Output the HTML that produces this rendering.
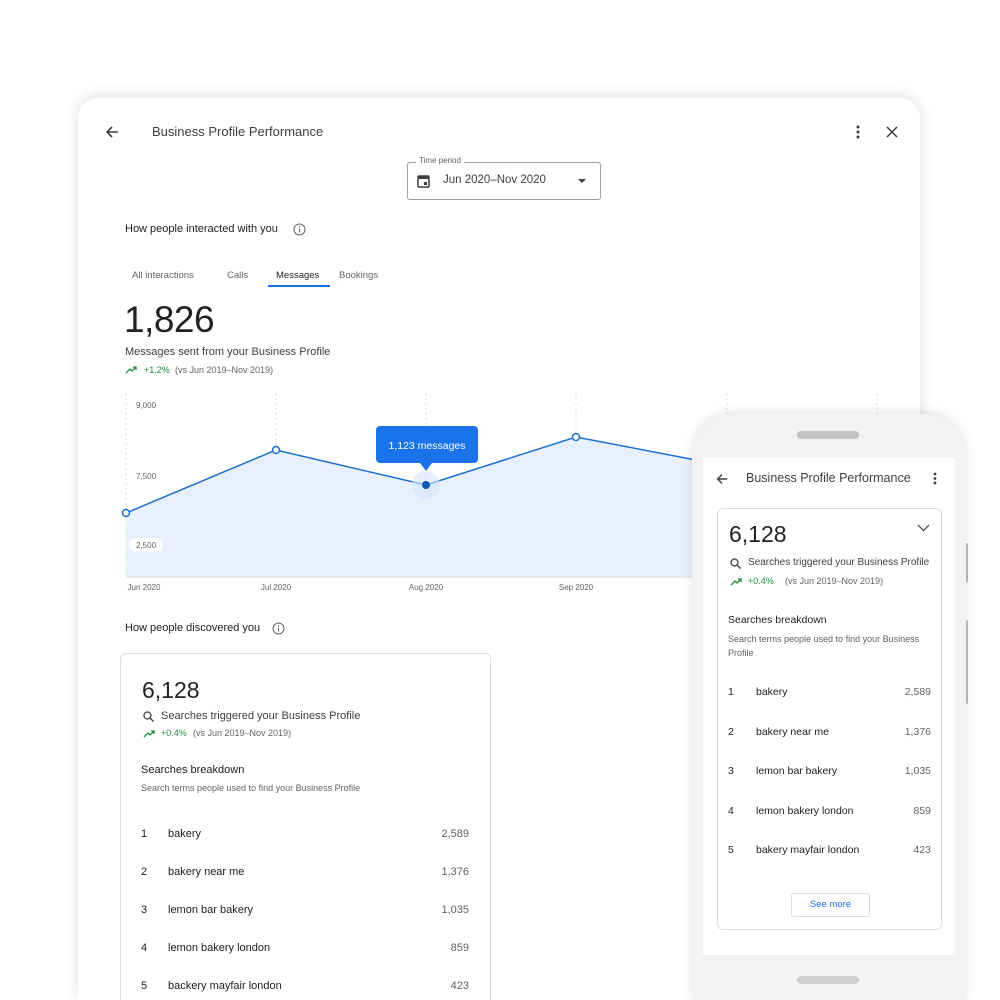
<!DOCTYPE html>
<html><head><meta charset="utf-8"><style>
*{margin:0;padding:0;box-sizing:border-box}
html,body{width:1000px;height:1000px;overflow:hidden}
body{background:#fff;font-family:"Liberation Sans",Arial,sans-serif;color:#202124;position:relative}
.abs{position:absolute}
.tab{left:78px;top:98px;width:842px;height:902px;background:#fff;border-radius:20px 20px 0 0;box-shadow:0 -2px 14px rgba(0,0,0,.12);overflow:hidden}
.t{position:absolute;white-space:nowrap}
.card{position:absolute;border:1px solid #dadce0;border-radius:6px;background:#fff}
.green{color:#1e8e3e}
.grey{color:#5f6368}
</style></head><body>
<div class="abs tab">
  <svg class="abs" style="left:26px;top:26px" width="16" height="16" viewBox="0 0 16 16"><path d="M14 8H3M8 3L3 8l5 5" stroke="#3c4043" stroke-width="1.6" fill="none"/></svg>
  <div class="t" style="left:74px;top:26px;font-size:13px;color:#3c4043">Business Profile Performance</div>
  <svg class="abs" style="left:776px;top:27px" width="8" height="14"><circle cx="4" cy="2" r="1.5" fill="#3c4043"/><circle cx="4" cy="7" r="1.5" fill="#3c4043"/><circle cx="4" cy="12" r="1.5" fill="#3c4043"/></svg>
  <svg class="abs" style="left:808px;top:28px" width="12" height="12"><path d="M1 1l10 10M11 1L1 11" stroke="#3c4043" stroke-width="1.5"/></svg>
  <div class="abs" style="left:329px;top:64px;width:194px;height:38px;border:1px solid #9aa0a6;border-radius:3px"></div>
  <div class="t" style="left:338px;top:58px;font-size:8px;color:#5f6368;background:#fff;padding:0 3px">Time period</div>
  <svg class="abs" style="left:339px;top:76px" width="13" height="14" viewBox="0 0 13 14"><rect x="1" y="2" width="11" height="11" rx="1" fill="none" stroke="#3c4043" stroke-width="1.5"/><rect x="1" y="2" width="11" height="3" fill="#3c4043"/><rect x="7" y="8" width="3" height="3" fill="#3c4043"/></svg>
  <div class="t" style="left:365px;top:76px;font-size:11.5px;color:#3c4043">Jun 2020–Nov 2020</div>
  <svg class="abs" style="left:500px;top:81px" width="8" height="5"><path d="M0 0h8L4 4z" fill="#3c4043"/></svg>

  <div class="t" style="left:47px;top:125px;font-size:11px">How people interacted with you</div>
  <svg class="abs" style="left:215px;top:125px" width="13" height="13"><circle cx="6.5" cy="6.5" r="5.5" fill="none" stroke="#5f6368"/><path d="M6.5 5.5v4" stroke="#5f6368"/><circle cx="6.5" cy="3.8" r=".7" fill="#5f6368"/></svg>
  <div class="t grey" style="left:54px;top:172px;font-size:9.5px">All interactions</div>
  <div class="t grey" style="left:149px;top:172px;font-size:9.5px">Calls</div>
  <div class="t" style="left:198px;top:172px;font-size:9.5px">Messages</div>
  <div class="abs" style="left:190px;top:187px;width:62px;height:2px;background:#1a73e8"></div>
  <div class="t grey" style="left:261px;top:172px;font-size:9.5px">Bookings</div>
  <div class="t" style="left:46px;top:201px;font-size:37px;letter-spacing:-.5px">1,826</div>
  <div class="t" style="left:47px;top:248px;font-size:11px;color:#3c4043">Messages sent from your Business Profile</div>
  <svg class="abs" style="left:47px;top:268px" width="13" height="8"><path d="M1 7l4-4 2 2 4-4M8 1h3v3" stroke="#1e8e3e" stroke-width="1.3" fill="none"/></svg>
  <div class="t green" style="left:66px;top:267px;font-size:9px">+1.2%</div>
  <div class="t grey" style="left:97px;top:267px;font-size:9px">(vs Jun 2019–Nov 2019)</div>

  <svg class="abs" style="left:0;top:290px" width="842" height="210">
    <g stroke="#dadce0" stroke-dasharray="2 3">
      <line x1="48" y1="5" x2="48" y2="189"/><line x1="198" y1="5" x2="198" y2="189"/><line x1="348" y1="5" x2="348" y2="189"/><line x1="498" y1="5" x2="498" y2="189"/><line x1="649" y1="5" x2="649" y2="189"/><line x1="799" y1="5" x2="799" y2="189"/>
    </g>
    <path d="M48 125L198 62L348 97L498 49L649 78L720 110V189H48Z" fill="#e8f0fd"/>
    <line x1="48" y1="189" x2="720" y2="189" stroke="#dadce0"/>
    <path d="M48 125L198 62L348 97L498 49L649 78L720 110" stroke="#1a6fd0" stroke-width="1.5" fill="none"/>
    <circle cx="348" cy="97" r="14" fill="#d6e4fb" opacity=".6"/>
    <circle cx="48" cy="125" r="3.5" fill="#fff" stroke="#1a6fd0" stroke-width="1.5"/>
    <circle cx="198" cy="62" r="3.5" fill="#fff" stroke="#1a6fd0" stroke-width="1.5"/>
    <circle cx="498" cy="49" r="3.5" fill="#fff" stroke="#1a6fd0" stroke-width="1.5"/>
    <circle cx="348" cy="97" r="4" fill="#1557b0"/>
    <rect x="298" y="38" width="102" height="37" rx="4" fill="#1a73e8"/>
    <path d="M342 75h12l-6 8z" fill="#1a73e8"/>
    <text x="349" y="61" font-size="10.5" fill="#fff" text-anchor="middle" font-family="Liberation Sans">1,123 messages</text>
    <text x="58" y="20" font-size="8" fill="#5f6368" font-family="Liberation Sans">9,000</text>
    <text x="58" y="91" font-size="8" fill="#5f6368" font-family="Liberation Sans">7,500</text>
    <rect x="51" y="150" width="34" height="14" rx="7" fill="#fff"/>
    <text x="58" y="160" font-size="8" fill="#5f6368" font-family="Liberation Sans">2,500</text>
    <g font-size="8" fill="#5f6368" font-family="Liberation Sans" text-anchor="middle">
      <text x="66" y="202">Jun 2020</text><text x="198" y="202">Jul 2020</text><text x="348" y="202">Aug 2020</text><text x="498" y="202">Sep 2020</text>
    </g>
  </svg>

  <div class="t" style="left:47px;top:524px;font-size:11px">How people discovered you</div>
  <svg class="abs" style="left:194px;top:524px" width="13" height="13"><circle cx="6.5" cy="6.5" r="5.5" fill="none" stroke="#5f6368"/><path d="M6.5 5.5v4" stroke="#5f6368"/><circle cx="6.5" cy="3.8" r=".7" fill="#5f6368"/></svg>
  <div class="card" style="left:42px;top:555px;width:371px;height:347px;border-bottom:none;border-radius:6px 6px 0 0;overflow:hidden">
    <div class="t" style="left:21px;top:23px;font-size:23px">6,128</div>
    <svg class="abs" style="left:22px;top:57px" width="11" height="11"><circle cx="4.5" cy="4.5" r="3.5" fill="none" stroke="#3c4043" stroke-width="1.3"/><path d="M7 7l3.5 3.5" stroke="#3c4043" stroke-width="1.4"/></svg>
    <div class="t" style="left:40px;top:56px;font-size:11px;color:#3c4043">Searches triggered your Business Profile</div>
    <svg class="abs" style="left:22px;top:76px" width="13" height="8"><path d="M1 7l4-4 2 2 4-4M8 1h3v3" stroke="#1e8e3e" stroke-width="1.3" fill="none"/></svg>
    <div class="t green" style="left:40px;top:74px;font-size:9px">+0.4%</div>
    <div class="t grey" style="left:72px;top:74px;font-size:9px">(vs Jun 2019–Nov 2019)</div>
    <div class="t" style="left:20px;top:110px;font-size:11px">Searches breakdown</div>
    <div class="t grey" style="left:20px;top:129px;font-size:9px">Search terms people used to find your Business Profile</div>
    <div style="position:absolute;left:20px;top:174px;width:328px;font-size:11px">
      <div style="position:relative;height:38px"><span class="t" style="left:0">1</span><span class="t" style="left:27px">bakery</span><span class="t grey" style="right:0">2,589</span></div>
      <div style="position:relative;height:38px"><span class="t" style="left:0">2</span><span class="t" style="left:27px">bakery near me</span><span class="t grey" style="right:0">1,376</span></div>
      <div style="position:relative;height:38px"><span class="t" style="left:0">3</span><span class="t" style="left:27px">lemon bar bakery</span><span class="t grey" style="right:0">1,035</span></div>
      <div style="position:relative;height:38px"><span class="t" style="left:0">4</span><span class="t" style="left:27px">lemon bakery london</span><span class="t grey" style="right:0">859</span></div>
      <div style="position:relative;height:38px"><span class="t" style="left:0">5</span><span class="t" style="left:27px">backery mayfair london</span><span class="t grey" style="right:0">423</span></div>
    </div>
  </div>
</div>

<!-- phone -->
<div class="abs" style="left:964px;top:543px;width:4px;height:40px;background:#bdbdbd;border-radius:2px"></div>
<div class="abs" style="left:964px;top:620px;width:4px;height:84px;background:#bdbdbd;border-radius:2px"></div>
<div class="abs" style="left:692px;top:414px;width:274px;height:586px;background:#f3f3f3;border-radius:40px 40px 0 0;box-shadow:0 -2px 10px rgba(0,0,0,.1);overflow:hidden">
  <div class="abs" style="left:105px;top:17px;width:62px;height:8px;border-radius:4px;background:#c4c4c4"></div>
  <div class="abs" style="left:105px;top:562px;width:62px;height:8px;border-radius:4px;background:#d0d0d0"></div>
  <div class="abs" style="left:11px;top:44px;width:252px;height:497px;background:#fff">
    <svg class="abs" style="left:12px;top:14px" width="14" height="14" viewBox="0 0 16 16"><path d="M14 8H3M8 3L3 8l5 5" stroke="#3c4043" stroke-width="1.6" fill="none"/></svg>
    <div class="t" style="left:43px;top:13px;font-size:12.5px;color:#3c4043">Business Profile Performance</div>
    <svg class="abs" style="left:229px;top:14px" width="6" height="13"><circle cx="3" cy="2" r="1.4" fill="#3c4043"/><circle cx="3" cy="6.5" r="1.4" fill="#3c4043"/><circle cx="3" cy="11" r="1.4" fill="#3c4043"/></svg>
    <div class="card" style="left:14px;top:50px;width:225px;height:422px">
      <div class="t" style="left:11px;top:12px;font-size:23px">6,128</div>
      <svg class="abs" style="left:199px;top:15px" width="13" height="8"><path d="M1 1l5.5 5.5L12 1" stroke="#3c4043" stroke-width="1.2" fill="none"/></svg>
      <svg class="abs" style="left:12px;top:49px" width="11" height="11"><circle cx="4.5" cy="4.5" r="3.5" fill="none" stroke="#3c4043" stroke-width="1.3"/><path d="M7 7l3.5 3.5" stroke="#3c4043" stroke-width="1.4"/></svg>
      <div class="t" style="left:30px;top:48px;font-size:10px;color:#3c4043">Searches triggered your Business Profile</div>
      <svg class="abs" style="left:12px;top:69px" width="13" height="8"><path d="M1 7l4-4 2 2 4-4M8 1h3v3" stroke="#1e8e3e" stroke-width="1.3" fill="none"/></svg>
      <div class="t green" style="left:30px;top:67px;font-size:9px">+0.4%</div>
      <div class="t grey" style="left:67px;top:67px;font-size:9px">(vs Jun 2019–Nov 2019)</div>
      <div class="t" style="left:10px;top:105px;font-size:10.5px">Searches breakdown</div>
      <div class="abs grey" style="left:10px;top:123px;width:200px;font-size:9px;line-height:14px">Search terms people used to find your Business Profile</div>
      <div style="position:absolute;left:10px;top:177px;width:203px;font-size:10.5px">
        <div style="position:relative;height:39.5px"><span class="t" style="left:0">1</span><span class="t" style="left:28px">bakery</span><span class="t grey" style="right:0">2,589</span></div>
        <div style="position:relative;height:39.5px"><span class="t" style="left:0">2</span><span class="t" style="left:28px">bakery near me</span><span class="t grey" style="right:0">1,376</span></div>
        <div style="position:relative;height:39.5px"><span class="t" style="left:0">3</span><span class="t" style="left:28px">lemon bar bakery</span><span class="t grey" style="right:0">1,035</span></div>
        <div style="position:relative;height:39.5px"><span class="t" style="left:0">4</span><span class="t" style="left:28px">lemon bakery london</span><span class="t grey" style="right:0">859</span></div>
        <div style="position:relative;height:39.5px"><span class="t" style="left:0">5</span><span class="t" style="left:28px">bakery mayfair london</span><span class="t grey" style="right:0">423</span></div>
      </div>
      <div class="abs" style="left:73px;top:384px;width:79px;height:24px;border:1px solid #dadce0;border-radius:3px;color:#1a73e8;font-size:9.5px;text-align:center;line-height:22px">See more</div>
    </div>
  </div>
</div>
</body></html>
